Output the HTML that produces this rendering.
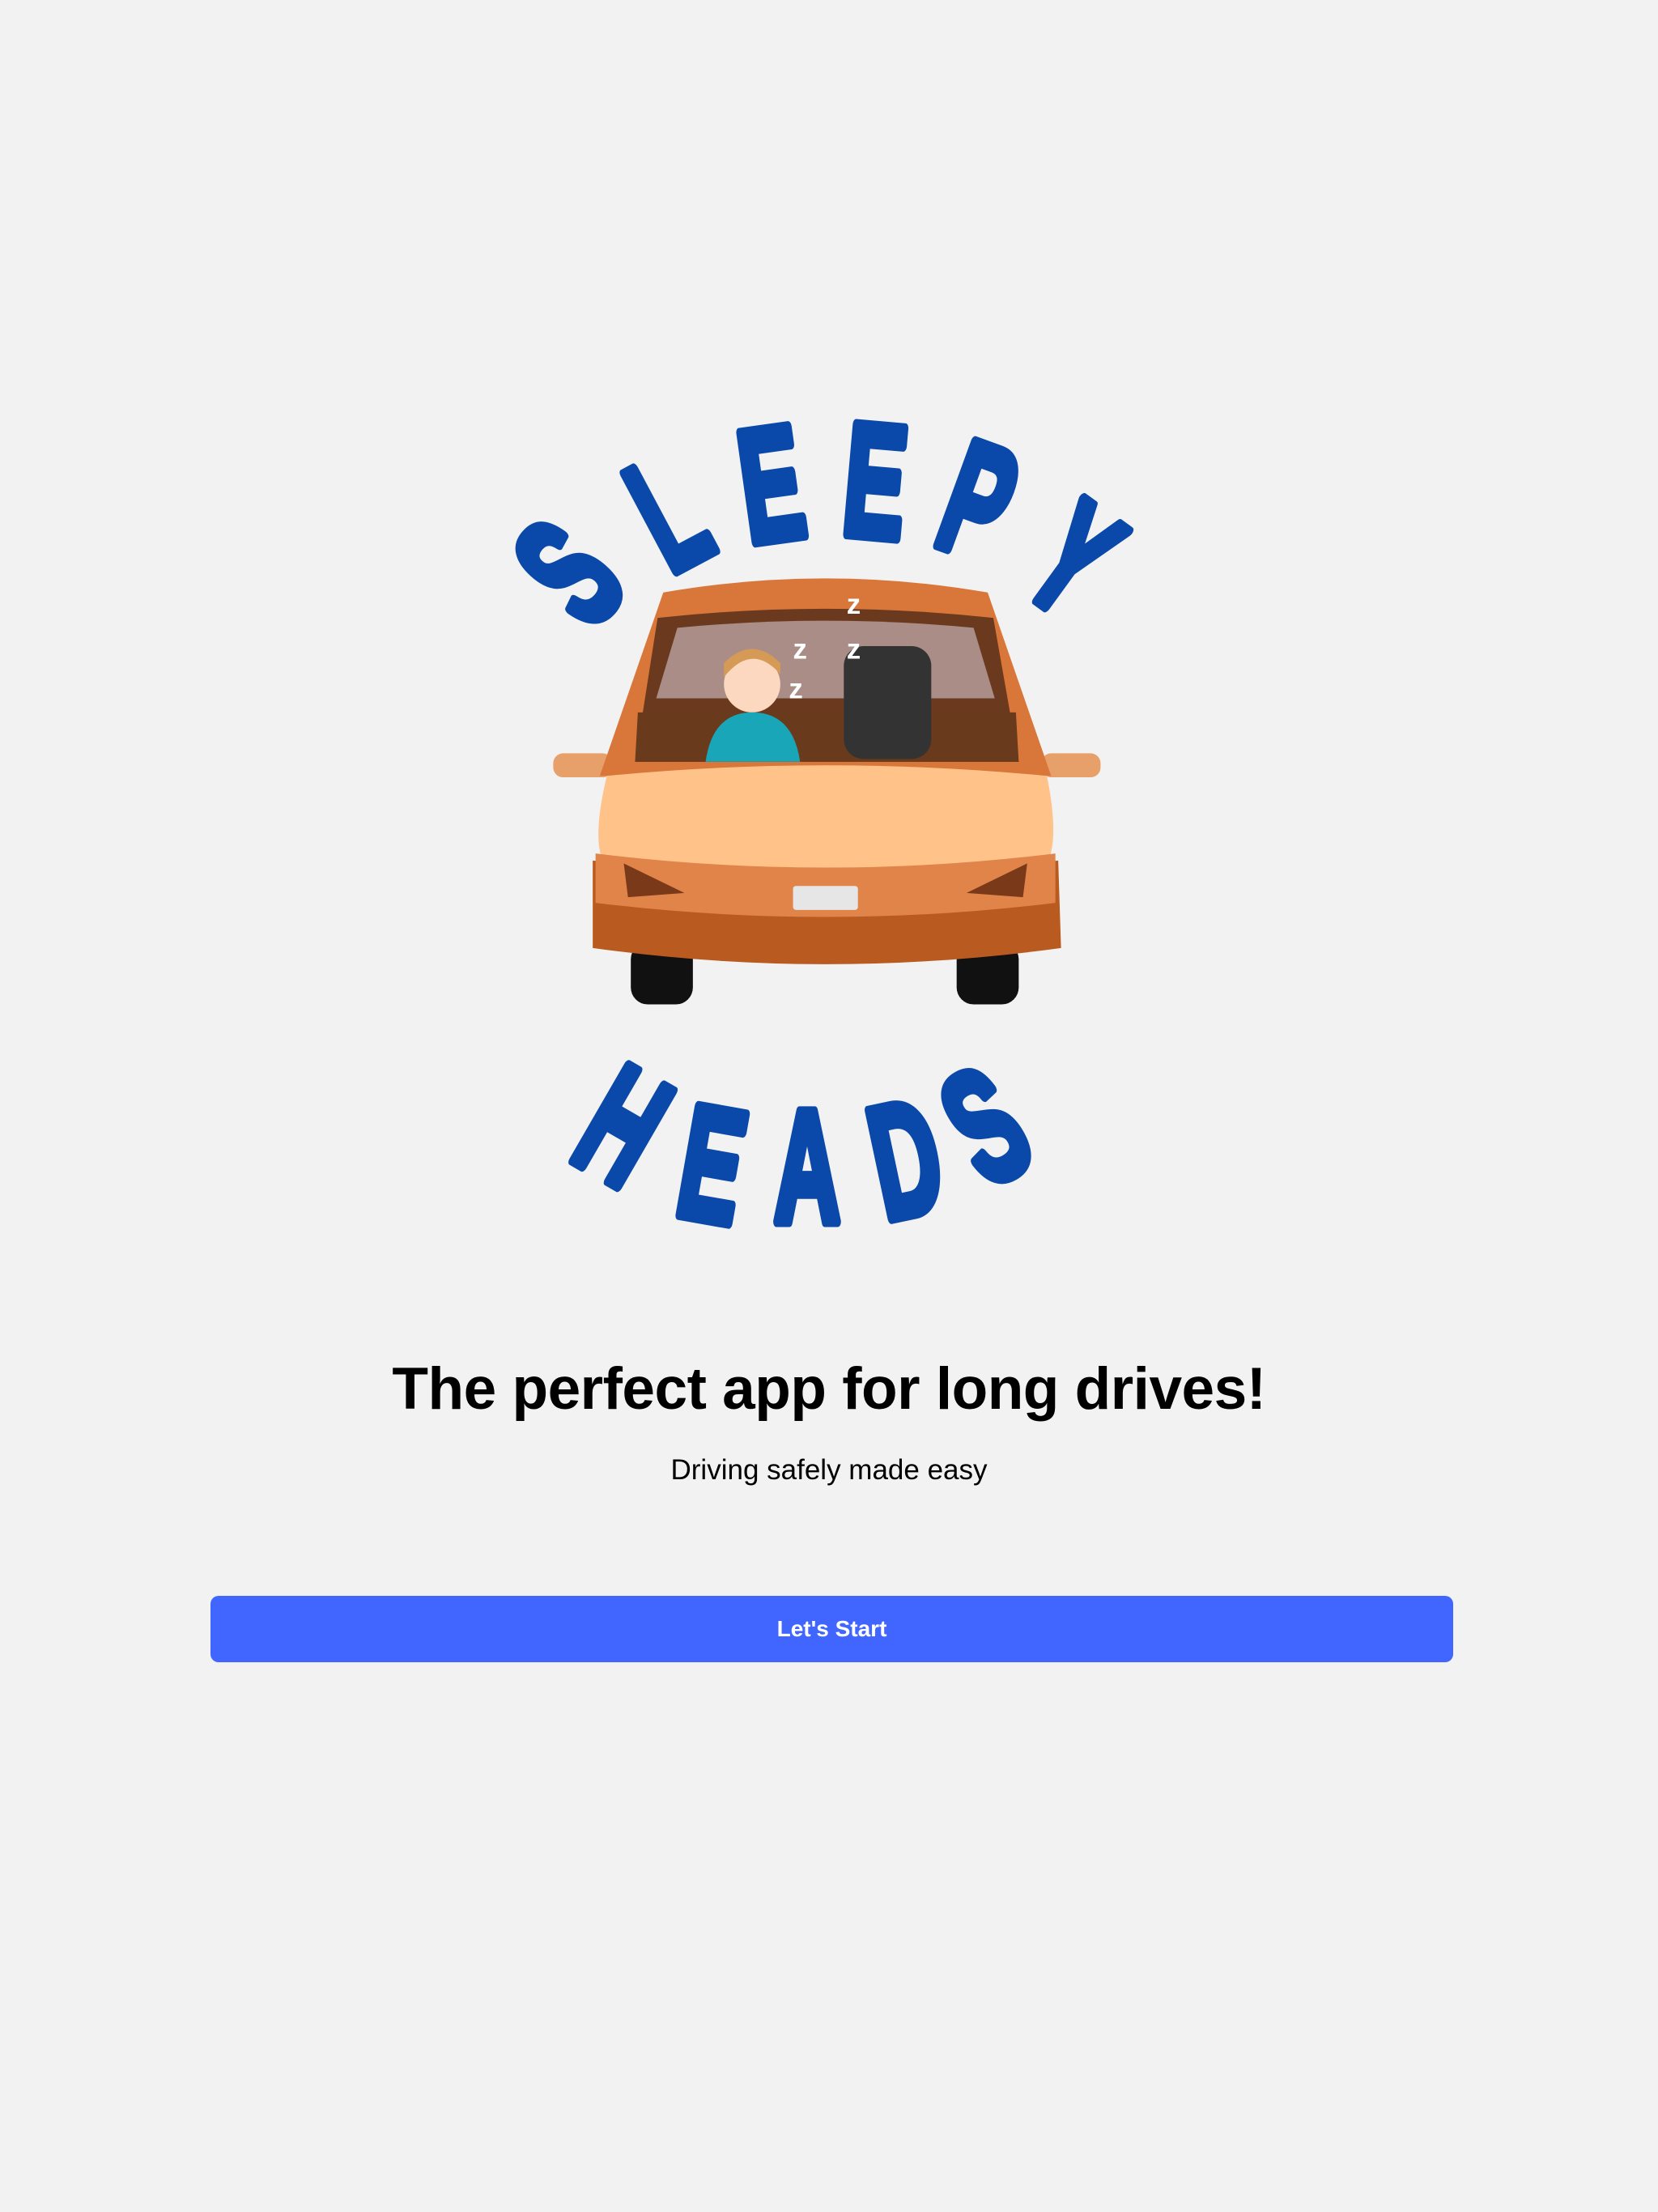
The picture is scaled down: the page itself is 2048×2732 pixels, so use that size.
<!DOCTYPE html>
<html><head><meta charset="utf-8"><style>
html,body{margin:0;padding:0;background:#f2f2f2;width:2048px;height:2732px;overflow:hidden;font-family:"Liberation Sans",sans-serif;}
svg.logo{position:absolute;left:0;top:0;}
.t{position:absolute;left:0;width:2048px;text-align:center;color:#000;}
.h1{top:1674px;font-size:73px;font-weight:bold;letter-spacing:-0.5px;}
.sub{top:1796px;font-size:35px;}
.btn{position:absolute;left:260px;top:1971px;width:1535px;height:82px;background:#4066ff;border-radius:10px;color:#fff;font-size:28px;font-weight:bold;text-align:center;line-height:82px;}
</style></head><body>
<svg class="logo" width="2048" height="2732" viewBox="0 0 1175 1568">
<g font-family="Liberation Sans Narrow, Liberation Sans, sans-serif" font-weight="bold" font-size="105" fill="#0a49aa" stroke="#0a49aa" stroke-width="7" stroke-linejoin="round" text-anchor="middle">
<text transform="translate(432,432) rotate(-48) scale(0.62,1.08)">S</text>
<text transform="translate(492,398) rotate(-28) scale(0.62,1.08)">L</text>
<text transform="translate(552,382) rotate(-8) scale(0.62,1.08)">E</text>
<text transform="translate(617,380) rotate(5) scale(0.62,1.08)">E</text>
<text transform="translate(680,392) rotate(20) scale(0.62,1.08)">P</text>
<text transform="translate(738,428) rotate(36) scale(0.62,1.08)">Y</text>
<text transform="translate(422,832) rotate(30) scale(0.62,1.08)">H</text>
<text transform="translate(498,864) rotate(10) scale(0.62,1.08)">E</text>
<text transform="translate(572,866) scale(0.62,1.08)">A</text>
<text transform="translate(650,860) rotate(-12) scale(0.62,1.08)">D</text>
<text transform="translate(718,832) rotate(-30) scale(0.62,1.08)">S</text>
</g>
<!-- car -->
<rect x="447" y="668" width="44" height="44" rx="12" fill="#111"/>
<rect x="678" y="668" width="44" height="44" rx="12" fill="#111"/>
<rect x="392" y="534" width="42" height="17" rx="7" fill="#e8a06a"/>
<rect x="738" y="534" width="42" height="17" rx="7" fill="#e8a06a"/>
<path d="M470,420 Q585,400 700,420 L745,550 L425,550 Z" fill="#d9773a"/>
<path d="M466,438 Q585,425 704,438 L722,540 L450,540 Z" fill="#6b3a1e"/>
<path d="M480,445 Q585,435 690,445 L705,495 L465,495 Z" fill="#a98d86"/>
<path d="M452,505 L720,505 L722,540 L450,540 Z" fill="#6a3a1d"/>
<rect x="598" y="458" width="62" height="80" rx="14" fill="#333"/>
<circle cx="533" cy="485" r="20" fill="#fbd8bf"/>
<path d="M513,480 Q533,455 553,478 L553,470 Q533,450 513,470Z" fill="#d59a55"/>
<path d="M500,540 Q505,505 533,505 Q562,505 567,540 Z" fill="#18a6b8"/>
<text x="600" y="435" fill="#fff" font-size="20" font-weight="bold" font-family="Liberation Sans">z</text>
<text x="562" y="467" fill="#fff" font-size="20" font-weight="bold" font-family="Liberation Sans">z</text>
<text x="600" y="467" fill="#fff" font-size="20" font-weight="bold" font-family="Liberation Sans">z</text>
<text x="559" y="495" fill="#fff" font-size="20" font-weight="bold" font-family="Liberation Sans">z</text>
<path d="M430,550 Q585,535 742,550 Q752,600 740,615 L430,615 Q418,600 430,550Z" fill="#ffc38a"/>
<path d="M420,610 Q585,625 750,610 L752,672 Q585,695 420,672 Z" fill="#b95b20"/>
<path d="M422,605 Q585,625 748,605 L748,640 Q585,660 422,640 Z" fill="#e0844a"/>
<path d="M442,612 L485,633 L445,636 Z" fill="#7a3a1a"/>
<path d="M728,612 L685,633 L725,636 Z" fill="#7a3a1a"/>
<rect x="562" y="628" width="46" height="17" rx="2" fill="#e6e6e6"/>
</svg>
<div class="t h1">The perfect app for long drives!</div>
<div class="t sub">Driving safely made easy</div>
<div class="btn">Let's Start</div>
</body></html>
